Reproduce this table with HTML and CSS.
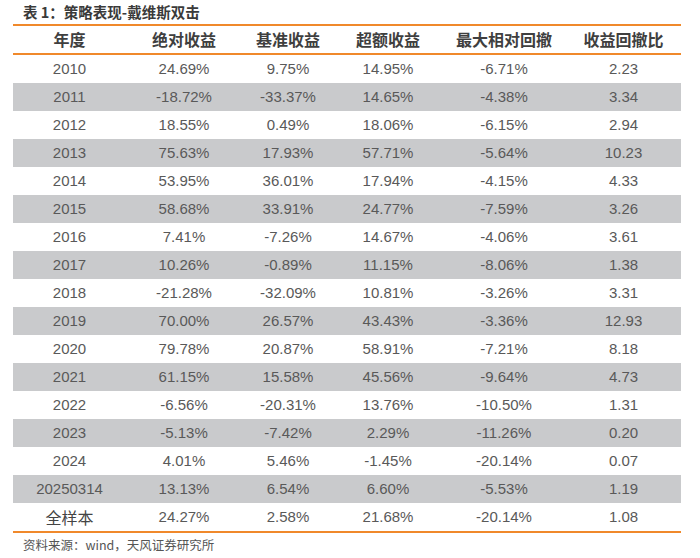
FILE: index.html
```html
<!DOCTYPE html>
<html lang="zh-CN">
<head>
<meta charset="utf-8">
<link rel="stylesheet" href="styles.css">
</head>
<body>
<div class="page">
  <div class="title">表 1：策略表现-戴维斯双击</div>
  <table class="perf">
    <colgroup>
      <col class="c1"><col class="c2"><col class="c3"><col class="c4"><col class="c5"><col class="c6">
    </colgroup>
    <thead>
      <tr><th>年度</th><th>绝对收益</th><th>基准收益</th><th>超额收益</th><th>最大相对回撤</th><th>收益回撤比</th></tr>
    </thead>
    <tbody>
      <tr><td>2010</td><td>24.69%</td><td>9.75%</td><td>14.95%</td><td>-6.71%</td><td>2.23</td></tr>
      <tr class="alt"><td>2011</td><td>-18.72%</td><td>-33.37%</td><td>14.65%</td><td>-4.38%</td><td>3.34</td></tr>
      <tr><td>2012</td><td>18.55%</td><td>0.49%</td><td>18.06%</td><td>-6.15%</td><td>2.94</td></tr>
      <tr class="alt"><td>2013</td><td>75.63%</td><td>17.93%</td><td>57.71%</td><td>-5.64%</td><td>10.23</td></tr>
      <tr><td>2014</td><td>53.95%</td><td>36.01%</td><td>17.94%</td><td>-4.15%</td><td>4.33</td></tr>
      <tr class="alt"><td>2015</td><td>58.68%</td><td>33.91%</td><td>24.77%</td><td>-7.59%</td><td>3.26</td></tr>
      <tr><td>2016</td><td>7.41%</td><td>-7.26%</td><td>14.67%</td><td>-4.06%</td><td>3.61</td></tr>
      <tr class="alt"><td>2017</td><td>10.26%</td><td>-0.89%</td><td>11.15%</td><td>-8.06%</td><td>1.38</td></tr>
      <tr><td>2018</td><td>-21.28%</td><td>-32.09%</td><td>10.81%</td><td>-3.26%</td><td>3.31</td></tr>
      <tr class="alt"><td>2019</td><td>70.00%</td><td>26.57%</td><td>43.43%</td><td>-3.36%</td><td>12.93</td></tr>
      <tr><td>2020</td><td>79.78%</td><td>20.87%</td><td>58.91%</td><td>-7.21%</td><td>8.18</td></tr>
      <tr class="alt"><td>2021</td><td>61.15%</td><td>15.58%</td><td>45.56%</td><td>-9.64%</td><td>4.73</td></tr>
      <tr><td>2022</td><td>-6.56%</td><td>-20.31%</td><td>13.76%</td><td>-10.50%</td><td>1.31</td></tr>
      <tr class="alt"><td>2023</td><td>-5.13%</td><td>-7.42%</td><td>2.29%</td><td>-11.26%</td><td>0.20</td></tr>
      <tr><td>2024</td><td>4.01%</td><td>5.46%</td><td>-1.45%</td><td>-20.14%</td><td>0.07</td></tr>
      <tr class="alt"><td>20250314</td><td>13.13%</td><td>6.54%</td><td>6.60%</td><td>-5.53%</td><td>1.19</td></tr>
      <tr class="last"><td class="cjk">全样本</td><td>24.27%</td><td>2.58%</td><td>21.68%</td><td>-20.14%</td><td>1.08</td></tr>
    </tbody>
  </table>
  <div class="source">资料来源：wind，天风证券研究所</div>
</div>
</body>
</html>
```

FILE: styles.css
```css
html, body {
  margin: 0;
  padding: 0;
  background: #ffffff;
}

.page {
  padding: 0 0 0 13px;
  font-family: "Liberation Sans", "Noto Sans CJK SC", sans-serif;
}

.title {
  height: 24px;
  line-height: 24px;
  padding-left: 10px;
  font-family: "Noto Sans CJK SC", sans-serif;
  font-weight: bold;
  font-size: 14.5px;
  color: #3a3a3a;
}

.perf {
  width: 668px;
  border-collapse: collapse;
  table-layout: fixed;
}

.c1 { width: 113px; }
.c2 { width: 116px; }
.c3 { width: 92px; }
.c4 { width: 108px; }
.c5 { width: 124px; }
.c6 { width: 115px; }

.perf thead tr {
  border-top: 2px solid #f0892b;
  border-bottom: 2px solid #f0892b;
}

.perf th {
  height: 27px;
  padding: 0;
  font-family: "Noto Sans CJK SC", sans-serif;
  font-weight: bold;
  font-size: 16px;
  color: #3f3f3f;
  text-align: center;
  vertical-align: middle;
  line-height: 27px;
}

.perf td {
  height: 28px;
  padding: 0;
  font-size: 15px;
  color: #595959;
  text-align: center;
  vertical-align: middle;
  line-height: 28px;
}

.perf td.cjk {
  font-family: "Noto Sans CJK SC", sans-serif;
  font-size: 16px;
  color: #444444;
}

.perf tr.alt td {
  background: #c9cacc;
}

.perf tr.last {
  border-bottom: 2px solid #f0892b;
}

.source {
  padding: 3px 0 0 10px;
  font-family: "Noto Sans CJK SC", sans-serif;
  font-size: 12.5px;
  color: #555555;
  line-height: 18px;
}
```
